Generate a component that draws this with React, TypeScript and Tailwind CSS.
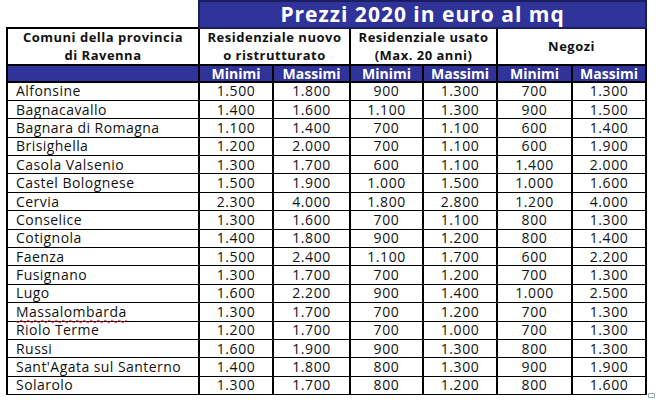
import React from "react";

const rows: string[][] = [
  ["Alfonsine", "1.500", "1.800", "900", "1.300", "700", "1.300"],
  ["Bagnacavallo", "1.400", "1.600", "1.100", "1.300", "900", "1.500"],
  ["Bagnara di Romagna", "1.100", "1.400", "700", "1.100", "600", "1.400"],
  ["Brisighella", "1.200", "2.000", "700", "1.100", "600", "1.900"],
  ["Casola Valsenio", "1.300", "1.700", "600", "1.100", "1.400", "2.000"],
  ["Castel Bolognese", "1.500", "1.900", "1.000", "1.500", "1.000", "1.600"],
  ["Cervia", "2.300", "4.000", "1.800", "2.800", "1.200", "4.000"],
  ["Conselice", "1.300", "1.600", "700", "1.100", "800", "1.300"],
  ["Cotignola", "1.400", "1.800", "900", "1.200", "800", "1.400"],
  ["Faenza", "1.500", "2.400", "1.100", "1.700", "600", "2.200"],
  ["Fusignano", "1.300", "1.700", "700", "1.200", "700", "1.300"],
  ["Lugo", "1.600", "2.200", "900", "1.400", "1.000", "2.500"],
  ["Massalombarda", "1.300", "1.700", "700", "1.200", "700", "1.300"],
  ["Riolo Terme", "1.200", "1.700", "700", "1.000", "700", "1.300"],
  ["Russi", "1.600", "1.900", "900", "1.300", "800", "1.300"],
  ["Sant'Agata sul Santerno", "1.400", "1.800", "800", "1.300", "900", "1.900"],
  ["Solarolo", "1.300", "1.700", "800", "1.200", "800", "1.600"],
];

const sub = ["Minimi", "Massimi", "Minimi", "Massimi", "Minimi", "Massimi"];

const head =
  "p-0 border-2 border-black text-center font-bold text-[13px] tracking-[0.5px] leading-[17.5px]";

export default function App() {
  return (
    <div
      className="relative w-[660px] h-[400px] bg-white overflow-hidden"
      style={{ fontFamily: '"Open Sans", "Liberation Sans", sans-serif' }}
    >
      <table className="table-fixed border-collapse w-[639px] ml-[6px] text-[#111]">
        <colgroup>
          <col className="w-[192px]" />
          <col className="w-[74px]" />
          <col className="w-[77px]" />
          <col className="w-[73px]" />
          <col className="w-[74px]" />
          <col className="w-[75px]" />
          <col className="w-[74px]" />
        </colgroup>
        <tbody>
          <tr className="h-[27px]">
            <td className="p-0"></td>
            <td
              colSpan={6}
              className="p-0 bg-[#30339a] border-2 border-[#1a1d5e] text-white text-center font-bold text-[21px] tracking-[1px] leading-none"
            >
              Prezzi 2020 in euro al mq
            </td>
          </tr>
          <tr className="h-[36px]">
            <td className={head}>
              <div>Comuni della provincia</div>
              <div>di Ravenna</div>
            </td>
            <td colSpan={2} className={head}>
              <div>Residenziale nuovo</div>
              <div>o ristrutturato</div>
            </td>
            <td colSpan={2} className={head}>
              <div>Residenziale usato</div>
              <div>(Max. 20 anni)</div>
            </td>
            <td colSpan={2} className={head}>
              Negozi
            </td>
          </tr>
          <tr className="h-[17px]">
            <td className="p-0 bg-[#30339a] border-2 border-black"></td>
            {sub.map((s, i) => (
              <td
                key={i}
                className="p-0 bg-[#30339a] border-2 border-black text-white text-center font-bold text-[14px] leading-none"
              >
                {s}
              </td>
            ))}
          </tr>
          {rows.map((r, ri) => (
            <tr key={ri} className="h-[18.4px]">
              {r.map((c, ci) => (
                <td
                  key={ci}
                  className={
                    ci === 0
                      ? "p-0 pl-[8px] border-x-2 border-y border-black text-left text-[14px] tracking-[0.45px] leading-none whitespace-nowrap"
                      : "p-0 border-x-2 border-y border-black text-center text-[14px] tracking-[0.6px] leading-none"
                  }
                >
                  {c === "Massalombarda" ? (
                    <span className="underline decoration-wavy decoration-red-500 decoration-1 underline-offset-2">
                      {c}
                    </span>
                  ) : (
                    c
                  )}
                </td>
              ))}
            </tr>
          ))}
        </tbody>
      </table>
      <div className="absolute left-[648px] top-[393px] w-[7px] h-[5px] border border-gray-400 rounded-[1px]" />
    </div>
  );
}
